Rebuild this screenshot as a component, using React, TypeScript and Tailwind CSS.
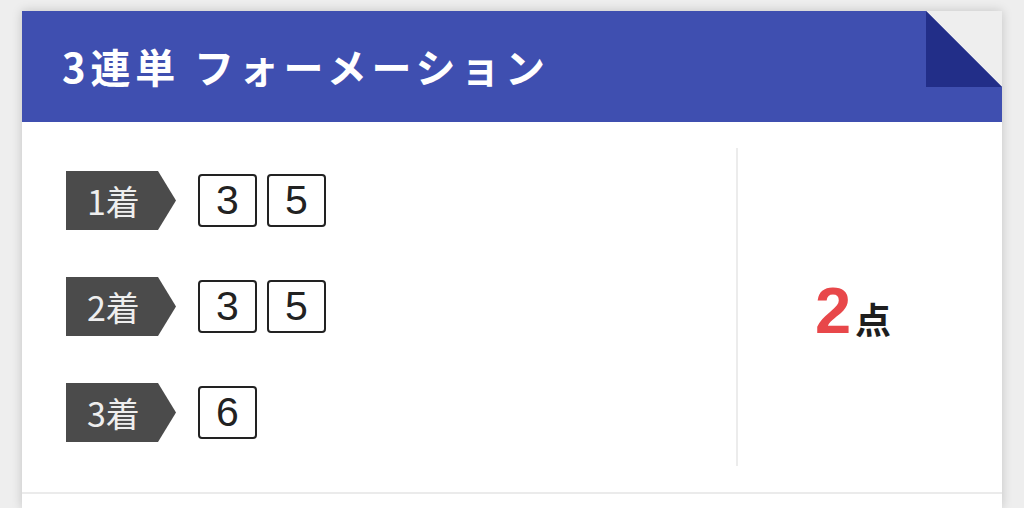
const rows = [
  { label: "1着", nums: [3, 5] },
  { label: "2着", nums: [3, 5] },
  { label: "3着", nums: [6] },
]

const jp = "font-['Noto_Sans_CJK_JP','Noto_Sans',sans-serif]"

export default function App() {
  return (
    <div className="min-h-screen bg-[#eeeeee] px-[22px] pt-[11px]">
      <div className="shadow-[0_0_10px_rgba(0,0,0,0.18)]">
        <header className="relative flex h-[111px] items-center bg-[#3f4fb0] pl-[40px]">
          <h2
            className={`${jp} text-[40px] font-bold tracking-[0.12em] text-white leading-none pb-[2px]`}
          >
            3連単 フォーメーション
          </h2>
          <svg
            className="absolute top-0 right-0"
            width="76"
            height="76"
            viewBox="0 0 76 76"
          >
            <polygon points="0,0 76,0 76,76" fill="#eeeeee" />
            <polygon points="0,0 0,76 76,76" fill="#222e88" />
          </svg>
        </header>

        <div className="bg-white">
          <section className="flex py-[26px]">
            <div className="flex w-[714px] flex-col gap-[47px] pl-[44px] pt-[23px] pb-[24px]">
              {rows.map((row, index) => (
                <Row key={index} label={row.label} nums={row.nums} />
              ))}
            </div>
            <div className="w-[2px] bg-[#ececec]" />
            <div className="flex flex-1 items-center justify-center pr-[34px] pt-[6px]">
              <span className="font-['Liberation_Sans',sans-serif] text-[65px] font-bold leading-none text-[#e8474a]">
                2
              </span>
              <span
                className={`${jp} ml-[4px] mt-[16px] text-[36px] font-bold leading-none text-[#1e1e1e]`}
              >
                点
              </span>
            </div>
          </section>
          <div className="h-[2px] bg-[#ebebeb]" />
          <div className="h-[14px]" />
        </div>
      </div>
    </div>
  )
}

function Row(_props: { label: string; nums: number[] }) {
  return (
    <div className="flex items-center">
      <div
        className={`${jp} flex h-[59px] w-[110px] items-center bg-[#4b4b4b] pl-[21px] text-[34px] leading-none text-[#eeeeee] [clip-path:polygon(0_0,92px_0,110px_50%,92px_100%,0_100%)]`}
      >
        {_props.label}
      </div>
      <div className="ml-[22px] flex gap-[10px]">
        {_props.nums.map((n, index) => (
          <div
            key={index}
            className="flex h-[53px] w-[59px] items-center justify-center rounded-[4px] border-2 border-[#222222] font-['Liberation_Sans',sans-serif] text-[41px] leading-none text-[#222222]"
          >
            {n}
          </div>
        ))}
      </div>
    </div>
  )
}
